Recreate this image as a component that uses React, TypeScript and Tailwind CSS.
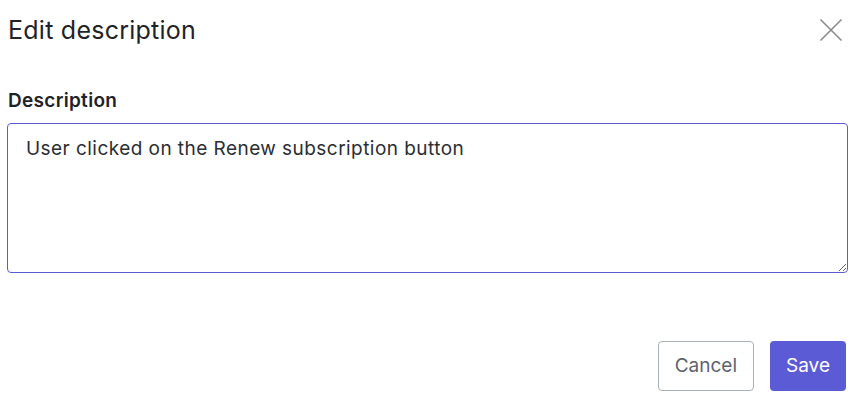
import React from "react";

export default function App() {
  return (
    <div className="w-[865px] h-[398px] bg-white relative" style={{ fontFamily: "Inter, 'Noto Sans', sans-serif" }}>
      <div className="flex items-center justify-between pl-[8px] pr-[21px] pt-[14px]">
        <h1 className="text-[25px] leading-[32px] tracking-[0.25px] text-[#1f2328] font-normal">Edit description</h1>
        <button className="w-[26px] h-[26px] flex items-center justify-center text-[#8a8a8a]">
          <svg width="24" height="24" viewBox="0 0 24 24" fill="none" stroke="currentColor" strokeWidth="1.6">
            <path d="M1.5 1.5L22.5 22.5M22.5 1.5L1.5 22.5" />
          </svg>
        </button>
      </div>
      <div className="px-[7px] pt-[43px]">
        <label className="block text-[19px] leading-[24px] tracking-[0.3px] font-semibold text-[#1f2328] pl-[1px]">Description</label>
        <textarea
          className="mt-[10px] block w-[841px] h-[150px] border border-[#5b5bd6] rounded-[4px] pl-[18px] pr-[12px] pt-[12px] text-[19px] leading-[26px] tracking-[0.45px] text-[#2a2e33] outline-none"
          defaultValue="User clicked on the Renew subscription button"
        />
      </div>
      <div className="flex justify-end gap-[16px] pr-[19px] pt-[68px]">
        <button className="h-[50px] px-[16px] border border-[#aab0b8] rounded-[4px] text-[19px] text-[#5c6370] bg-white">Cancel</button>
        <button className="h-[50px] px-[16px] rounded-[4px] text-[19px] text-white bg-[#5b5bd6]">Save</button>
      </div>
    </div>
  );
}
